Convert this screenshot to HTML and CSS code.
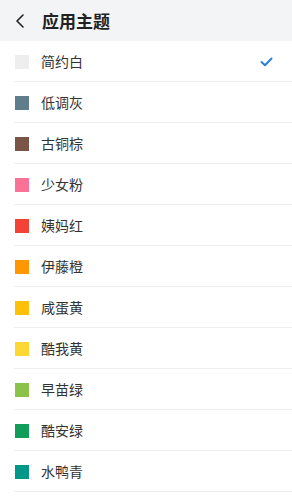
FILE: index.html
```html
<!DOCTYPE html>
<html lang="zh-CN">
<head>
<meta charset="utf-8">
<title>应用主题</title>
<link rel="stylesheet" href="styles.css">
</head>
<body>
<header class="bar">
  <svg class="back" width="10" height="14" viewBox="0 0 10 14"><path d="M8 1 L2 7 L8 13" fill="none" stroke="#222" stroke-width="1.6" stroke-linecap="round" stroke-linejoin="round"/></svg>
  <h1 class="title">应用主题</h1>
</header>
<ul class="list">
  <li class="row"><span class="sw" style="background:#eeeeee"></span><span class="name">简约白</span>
    <svg class="check" width="13" height="10" viewBox="0 0 13 10"><path d="M1.5 5 L5 8.3 L11.5 1.5" fill="none" stroke="#2b7fd6" stroke-width="2" stroke-linecap="round" stroke-linejoin="round"/></svg></li>
  <li class="row"><span class="sw" style="background:#607d8b"></span><span class="name">低调灰</span></li>
  <li class="row"><span class="sw" style="background:#795548"></span><span class="name">古铜棕</span></li>
  <li class="row"><span class="sw" style="background:#fb7299"></span><span class="name">少女粉</span></li>
  <li class="row"><span class="sw" style="background:#f44336"></span><span class="name">姨妈红</span></li>
  <li class="row"><span class="sw" style="background:#ff9800"></span><span class="name">伊藤橙</span></li>
  <li class="row"><span class="sw" style="background:#ffc107"></span><span class="name">咸蛋黄</span></li>
  <li class="row"><span class="sw" style="background:#fdd835"></span><span class="name">酷我黄</span></li>
  <li class="row"><span class="sw" style="background:#8bc34a"></span><span class="name">早苗绿</span></li>
  <li class="row"><span class="sw" style="background:#109d58"></span><span class="name">酷安绿</span></li>
  <li class="row"><span class="sw" style="background:#009688"></span><span class="name">水鸭青</span></li>
</ul>
</body>
</html>
```
FILE: styles.css
```css
html, body {
  margin: 0;
  padding: 0;
  background: #ffffff;
  font-family: "Noto Sans CJK SC", "Noto Sans", sans-serif;
}
.bar {
  height: 41px;
  background: #f3f4f6;
  display: flex;
  align-items: center;
  padding-left: 15px;
  box-sizing: border-box;
}
.back {
  display: block;
  margin-top: 1px;
}
.title {
  margin: 0 0 0 17px;
  font-size: 17px;
  font-weight: 700;
  color: #222222;
  line-height: 1;
}
.list {
  list-style: none;
  margin: 0;
  padding: 0;
}
.row {
  height: 41px;
  margin-left: 14px;
  border-bottom: 1px solid #efefef;
  display: flex;
  align-items: center;
  box-sizing: border-box;
}
.sw {
  width: 14px;
  height: 14px;
  margin-left: 1px;
  margin-top: 1px;
  flex: none;
}
.name {
  margin-left: 12px;
  font-size: 14px;
  color: #333333;
  flex: 1;
}
.check {
  display: block;
  margin-right: 19px;
  margin-top: 1px;
}
```
